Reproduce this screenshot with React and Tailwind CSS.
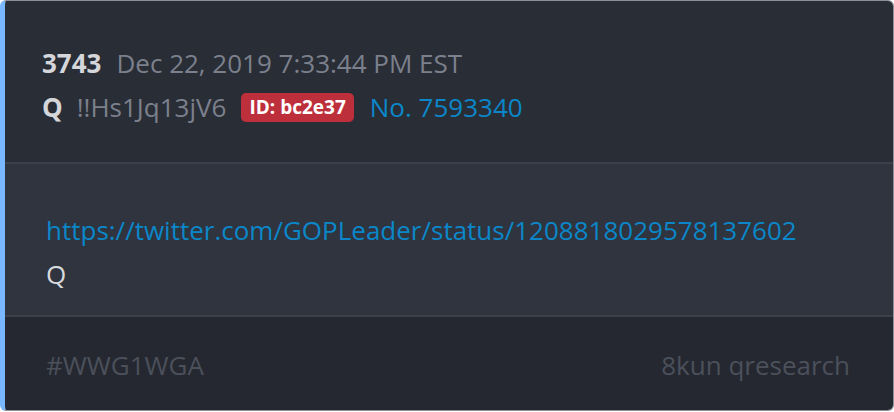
import React from "react";

export default function App() {
  return (
    <div className="w-[894px] h-[412px] bg-white" style={{ fontFamily: "'Open Sans', 'Noto Sans', sans-serif" }}>
      <div className="h-[411px] flex flex-col rounded-[6px] overflow-hidden border border-[#8b9099] border-l-[5px] border-l-[#79b8ff]">
        {/* header */}
        <div className="bg-[#292d36] h-[163px] shrink-0 pl-[37px] pt-[40px] border-b-2 border-[#3b404a] text-[26px] leading-[44px]">
          <div className="flex items-center h-[44px]">
            <span className="font-bold text-[#d4d6da]">3743</span>
            <span className="ml-[15px] text-[#7b808c]">Dec 22, 2019 7:33:44 PM EST</span>
          </div>
          <div className="flex items-center h-[44px]">
            <span className="font-bold text-[#d4d6da]">Q</span>
            <span className="ml-[14px] text-[#7b808c]">!!Hs1Jq13jV6</span>
            <span className="ml-[15px] bg-[#bd2f3b] text-white font-bold text-[19px] leading-[29px] h-[29px] px-[8px] rounded-[5px]">ID: bc2e37</span>
            <span className="ml-[16px] text-[#0b87c9]">No. 7593340</span>
          </div>
        </div>
        {/* body */}
        <div className="bg-[#2f343e] h-[153px] shrink-0 pl-[41px] pt-[44px] border-b-2 border-[#3b404a] text-[26px] leading-[44px]">
          <div className="text-[#0b87c9]">https://twitter.com/GOPLeader/status/1208818029578137602</div>
          <div className="text-[#d8dadd]">Q</div>
        </div>
        {/* footer */}
        <div className="bg-[#252830] flex-1 flex items-center justify-between pl-[41px] pr-[43px] pt-[3px] text-[26px] text-[#4b505b]">
          <span>#WWG1WGA</span>
          <span>8kun qresearch</span>
        </div>
      </div>
    </div>
  );
}
